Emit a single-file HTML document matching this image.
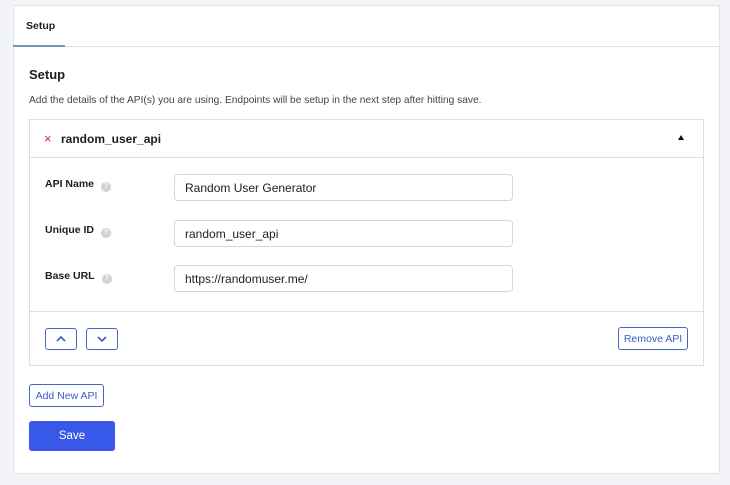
<!DOCTYPE html>
<html><head><meta charset="utf-8"><style>
*{box-sizing:border-box;margin:0;padding:0}
body{width:730px;height:485px;background:#f3f4f7;font-family:"Liberation Sans",sans-serif;color:#1e1e1e;position:relative;overflow:hidden}
.a{position:absolute}
.card{left:13px;top:5px;width:707px;height:469px;background:#fff;border:1px solid #e2e4e9}
.tabline{left:13px;top:46px;width:707px;height:1px;background:#e2e4e9}
.tabul{left:13px;top:45px;width:52px;height:2px;background:#6a9bb0}
.panel{left:29px;top:119px;width:675px;height:247px;border:1px solid #dcdde2;background:#fff}
.inp{left:174px;width:339px;height:27px;border:1px solid #d4d6db;border-radius:4px;font-size:12px;padding:0 10px;display:flex;align-items:center;color:#1e1e1e}
.lbl{left:45px;font-size:10.5px;font-weight:bold}
.q{display:inline-block;width:10px;height:10px;border-radius:50%;background:#d0d2d6;margin-left:7px;vertical-align:-1px;color:#fff;font-size:7px;text-align:center;line-height:10px}
.btn{border:1px solid #4a65c9;border-radius:3px;color:#3d5ac8;font-size:10.5px;background:#fff;display:flex;align-items:center;justify-content:center}
</style></head><body>
<div class="a card"></div>
<div class="a tabline"></div>
<div class="a tabul"></div>
<div class="a" style="left:26px;top:20px;font-size:10.5px;font-weight:bold">Setup</div>
<div class="a" style="left:29px;top:67px;font-size:13px;font-weight:bold">Setup</div>
<div class="a" style="left:29px;top:95px;font-size:10.2px;color:#444">Add the details of the API(s) you are using. Endpoints will be setup in the next step after hitting save.</div>
<div class="a panel"></div>
<div class="a" style="left:29px;top:157px;width:675px;height:1px;background:#dcdde2"></div>
<div class="a" style="left:44px;top:131px;font-size:13px;color:#d0342c">×</div>
<div class="a" style="left:61px;top:132px;font-size:12px;font-weight:bold">random_user_api</div>
<div class="a" style="left:678px;top:135px;width:0;height:0;border-left:3.5px solid transparent;border-right:3.5px solid transparent;border-bottom:5px solid #111"></div>
<div class="a lbl" style="top:178px">API Name<span class="q">?</span></div>
<div class="a lbl" style="top:224px">Unique ID<span class="q">?</span></div>
<div class="a lbl" style="top:270px">Base URL<span class="q">?</span></div>
<div class="a inp" style="top:174px">Random User Generator</div>
<div class="a inp" style="top:220px">random_user_api</div>
<div class="a inp" style="top:265px">https://randomuser.me/</div>
<div class="a" style="left:29px;top:311px;width:675px;height:1px;background:#dcdde2"></div>
<div class="a btn" style="left:45px;top:328px;width:32px;height:22px"><svg width="12" height="8" viewBox="0 0 12 8"><path d="M2 6L6 2L10 6" fill="none" stroke="#3d5ac8" stroke-width="1.6"/></svg></div>
<div class="a btn" style="left:86px;top:328px;width:32px;height:22px"><svg width="12" height="8" viewBox="0 0 12 8"><path d="M2 2L6 6L10 2" fill="none" stroke="#3d5ac8" stroke-width="1.6"/></svg></div>
<div class="a btn" style="left:618px;top:327px;width:70px;height:23px">Remove API</div>
<div class="a btn" style="left:29px;top:384px;width:75px;height:23px">Add New API</div>
<div class="a" style="left:29px;top:421px;width:86px;height:30px;background:#3858e9;border-radius:3px;color:#fff;font-size:11.5px;display:flex;align-items:center;justify-content:center">Save</div>
</body></html>
